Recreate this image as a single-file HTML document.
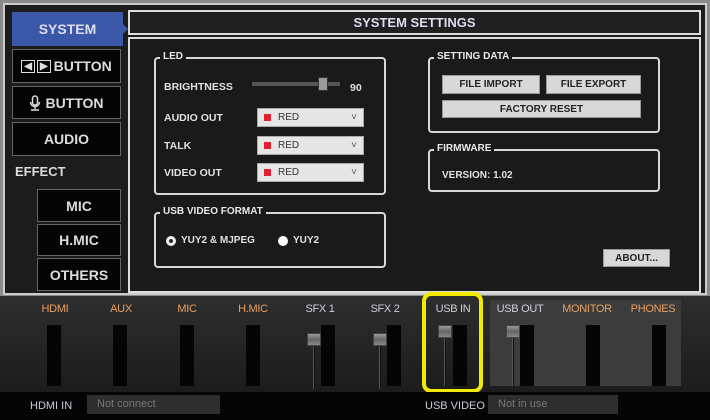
<!DOCTYPE html>
<html><head><style>
*{margin:0;padding:0;box-sizing:border-box}
body{width:710px;height:420px;background:#8a8a8a;font-family:"Liberation Sans",sans-serif;font-weight:bold;position:relative;overflow:hidden;color:#e8e8e8}
.a{position:absolute}
.nav{background:#050505;border:1px solid #666;color:#ddd;font-size:14px;display:flex;align-items:center;justify-content:center}
.grp{border:2px solid #d8d8d8;border-radius:4px}
.gt{position:absolute;top:-8px;left:4px;background:#1a1a1a;font-size:10px;padding:0 3px;color:#e8e8e8}
.lbl{font-size:10.5px;color:#e0e0e0}
.sel{background:#e6e6e6;border:1px solid #aaa;color:#333;font-size:10px;font-weight:normal;padding-left:20px;line-height:17px}
.sel:before{content:"";position:absolute;left:6px;top:5px;width:7px;height:7px;background:#e02030}
.sel:after{content:"˅";position:absolute;right:6px;top:0;font-size:10px;color:#555}
.btn{background:#d8d8d8;border:1px solid #999;color:#222;font-size:10px;display:flex;align-items:center;justify-content:center}
.ml{font-size:11px;font-weight:normal;text-align:center;width:70px;top:303px;letter-spacing:-0.3px}
.o{color:#e9a060}.w{color:#ccd0d8}
.bar{background:#050505;width:14px;top:325px;height:61px}
.h{width:14px;height:13px;background:linear-gradient(#999,#666 50%,#888);border:1px solid #444}
.ln{width:2px;background:#111;border-left:1px solid #555}
</style></head><body>
<div class="a" style="left:3px;top:3px;width:704px;height:292px;background:#1c1c1c;border:2px solid #ccc"></div>
<div class="a" style="left:12px;top:12px;width:111px;height:34px;background:#3a57a8;color:#dde;font-size:14px;display:flex;align-items:center;justify-content:center">SYSTEM</div>
<div class="a" style="left:123px;top:24px;width:0;height:0;border-left:5px solid #3a57a8;border-top:5px solid transparent;border-bottom:5px solid transparent"></div>
<div class="a nav" style="left:12px;top:49px;width:109px;height:34px"><span style="font-size:10px;border:1.5px solid #ddd;padding:0 2px;margin-right:2px">◀</span><span style="font-size:10px;border:1.5px solid #ddd;padding:0 2px;margin-right:3px">▶</span>BUTTON</div>
<div class="a nav" style="left:12px;top:86px;width:109px;height:33px"><svg width="12" height="16" viewBox="0 0 12 16" style="margin-right:4px"><rect x="3.5" y="1" width="5" height="9" rx="2.5" fill="none" stroke="#ddd" stroke-width="1.5"/><path d="M1.5 7a4.5 4.5 0 0 0 9 0M6 11.5v2.5M2 15h8" fill="none" stroke="#ddd" stroke-width="1.5"/></svg>BUTTON</div>
<div class="a nav" style="left:12px;top:122px;width:109px;height:34px">AUDIO</div>
<div class="a" style="left:15px;top:164px;font-size:13px;color:#ddd">EFFECT</div>
<div class="a nav" style="left:37px;top:189px;width:84px;height:33px">MIC</div>
<div class="a nav" style="left:37px;top:224px;width:84px;height:32px">H.MIC</div>
<div class="a nav" style="left:37px;top:258px;width:84px;height:33px">OTHERS</div>

<div class="a" style="left:128px;top:10px;width:573px;height:25px;background:#202020;border:2px solid #ddd;font-size:13px;color:#dde;text-align:center;line-height:21px">SYSTEM SETTINGS</div>
<div class="a" style="left:128px;top:37px;width:573px;height:256px;background:#1a1a1a;border:2px solid #ddd"></div>

<div class="a grp" style="left:154px;top:57px;width:232px;height:138px"><div class="gt">LED</div></div>
<div class="a lbl" style="left:164px;top:81px">BRIGHTNESS</div>
<div class="a" style="left:252px;top:82px;width:88px;height:4px;background:#555"></div>
<div class="a" style="left:318px;top:77px;width:10px;height:14px;background:#999;border:1px solid #333"></div>
<div class="a lbl" style="left:350px;top:82px">90</div>
<div class="a lbl" style="left:164px;top:112px">AUDIO OUT</div>
<div class="a sel" style="left:257px;top:108px;width:107px;height:19px">RED</div>
<div class="a lbl" style="left:164px;top:140px">TALK</div>
<div class="a sel" style="left:257px;top:136px;width:107px;height:19px">RED</div>
<div class="a lbl" style="left:164px;top:167px">VIDEO OUT</div>
<div class="a sel" style="left:257px;top:163px;width:107px;height:19px">RED</div>

<div class="a grp" style="left:154px;top:212px;width:232px;height:56px"><div class="gt">USB VIDEO FORMAT</div></div>
<div class="a" style="left:166px;top:236px;width:10px;height:10px;border-radius:50%;background:#eee;border:3px solid #eee;box-shadow:inset 0 0 0 2px #222"></div>
<div class="a lbl" style="left:181px;top:235px;font-size:10px">YUY2 &amp; MJPEG</div>
<div class="a" style="left:278px;top:236px;width:10px;height:10px;border-radius:50%;background:#fff"></div>
<div class="a lbl" style="left:293px;top:235px;font-size:10px">YUY2</div>

<div class="a grp" style="left:428px;top:57px;width:232px;height:76px"><div class="gt">SETTING DATA</div></div>
<div class="a btn" style="left:442px;top:75px;width:98px;height:19px">FILE IMPORT</div>
<div class="a btn" style="left:546px;top:75px;width:95px;height:19px">FILE EXPORT</div>
<div class="a btn" style="left:442px;top:100px;width:199px;height:18px">FACTORY RESET</div>
<div class="a grp" style="left:428px;top:149px;width:232px;height:43px"><div class="gt">FIRMWARE</div></div>
<div class="a lbl" style="left:442px;top:170px;font-size:10px">VERSION: 1.02</div>
<div class="a btn" style="left:603px;top:249px;width:67px;height:18px">ABOUT...</div>

<div class="a" style="left:0;top:296px;width:710px;height:96px;background:linear-gradient(#2e2e2e,#1c1c1c)"></div>
<div class="a" style="left:490px;top:300px;width:191px;height:86px;background:#3c3c3c"></div>
<div class="a ml o" style="left:20px">HDMI</div>
<div class="a ml o" style="left:86px">AUX</div>
<div class="a ml o" style="left:152px">MIC</div>
<div class="a ml o" style="left:218px">H.MIC</div>
<div class="a ml w" style="left:285px">SFX 1</div>
<div class="a ml w" style="left:350px">SFX 2</div>
<div class="a ml w" style="left:418px">USB IN</div>
<div class="a ml w" style="left:485px">USB OUT</div>
<div class="a ml o" style="left:552px">MONITOR</div>
<div class="a ml o" style="left:618px">PHONES</div>
<div class="a bar" style="left:47px"></div>
<div class="a bar" style="left:113px"></div>
<div class="a bar" style="left:180px"></div>
<div class="a bar" style="left:246px"></div>
<div class="a bar" style="left:321px"></div><div class="a ln" style="left:313px;top:339px;height:50px"></div><div class="a h" style="left:307px;top:333px"></div>
<div class="a bar" style="left:387px"></div><div class="a ln" style="left:379px;top:339px;height:50px"></div><div class="a h" style="left:373px;top:333px"></div>
<div class="a bar" style="left:453px"></div><div class="a ln" style="left:444px;top:338px;height:48px"></div><div class="a h" style="left:438px;top:325px"></div>
<div class="a bar" style="left:520px"></div><div class="a ln" style="left:512px;top:338px;height:48px"></div><div class="a h" style="left:506px;top:325px"></div>
<div class="a bar" style="left:586px"></div>
<div class="a bar" style="left:652px"></div>
<div class="a" style="left:422px;top:292px;width:61px;height:101px;border:4px solid #f2ea00;border-radius:9px"></div>

<div class="a" style="left:0;top:392px;width:710px;height:28px;background:#050505"></div>
<div class="a" style="left:30px;top:400px;font-size:11px;font-weight:normal;color:#ccd">HDMI IN</div>
<div class="a" style="left:87px;top:395px;width:133px;height:19px;background:#2e2e2e;color:#777;font-size:11px;font-weight:normal;padding:3px 10px">Not connect</div>
<div class="a" style="left:425px;top:400px;font-size:11px;font-weight:normal;color:#ccd">USB VIDEO</div>
<div class="a" style="left:488px;top:395px;width:130px;height:19px;background:#2e2e2e;color:#777;font-size:11px;font-weight:normal;padding:3px 10px">Not in use</div>
</body></html>
